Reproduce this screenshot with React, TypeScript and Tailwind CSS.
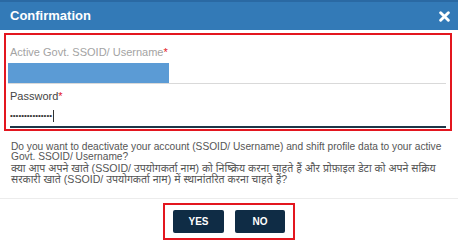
export default function App() {
  return (
    <div className="w-[458px] h-[240px] bg-white overflow-hidden font-['Liberation_Sans','Noto_Sans',sans-serif]">
      <div className="h-[30px] bg-[#337ab7] border-t-2 border-[#2a69a3] flex items-center justify-between pl-[10px] pr-[8px]">
        <span className="text-white text-[13px] font-bold">Confirmation</span>
        <svg width="11" height="11" viewBox="0 0 10 10">
          <path d="M1.5 1.5 L8.5 8.5 M8.5 1.5 L1.5 8.5" stroke="#fff" strokeWidth="2.6" strokeLinecap="round" />
        </svg>
      </div>
      <div className="pt-[3px] pl-[4px] pr-[6px]">
        <div className="border-2 border-[#e3161f] pl-[2px] pr-[4px] pt-[11px] pb-[1px]">
          <div className="pl-[2px] text-[11px] leading-[13px] text-[#a3a3a3]">
            Active Govt. SSOID/ Username<span className="text-[#e3161f]">*</span>
          </div>
          <div className="mt-[4px] h-[21px] border-b border-[#d9d9d9]">
            <div className="w-[161px] h-[20px] bg-[#5b9bd5]" />
          </div>
          <div className="pl-[2px] mt-[6px] text-[11px] leading-[13px] text-[#444]">
            Password<span className="text-[#e3161f]">*</span>
          </div>
          <div className="ml-[2px] mt-[6px] h-[19px] border-b-2 border-[#1d3446] flex items-start">
            <span className="text-[8px] leading-[13px] text-[#333]">•••••••••••••••</span>
            <span className="w-px h-[12px] bg-[#333] ml-[1px] mt-[1px]" />
          </div>
        </div>
      </div>
      <div className="pl-[11px] pr-[10px] pt-[11px] text-[10.2px] leading-[10.4px] text-[#555]">
        Do you want to deactivate your account (SSOID/ Username) and shift profile data to your active Govt. SSOID/ Username?
        <br />
        <span className="text-[10.6px]">
          क्या आप अपने खाते (SSOID/ उपयोगकर्ता नाम) को निष्क्रिय करना चाहते हैं और प्रोफ़ाइल डेटा को अपने सक्रिय सरकारी खाते (SSOID/ उपयोगकर्ता नाम) में स्थानांतरित करना चाहते हैं?
        </span>
      </div>
      <div className="mt-[12px] border-t border-[#ececec] pt-[4px] flex justify-center">
        <div className="border-2 border-[#e3161f] px-[8px] py-[5px] flex gap-[11px]">
          <button className="w-[51px] h-[23px] bg-[#0f2c45] rounded-[2px] text-white text-[10px] font-bold">YES</button>
          <button className="w-[50px] h-[23px] bg-[#0f2c45] rounded-[2px] text-white text-[10px] font-bold">NO</button>
        </div>
      </div>
    </div>
  );
}
